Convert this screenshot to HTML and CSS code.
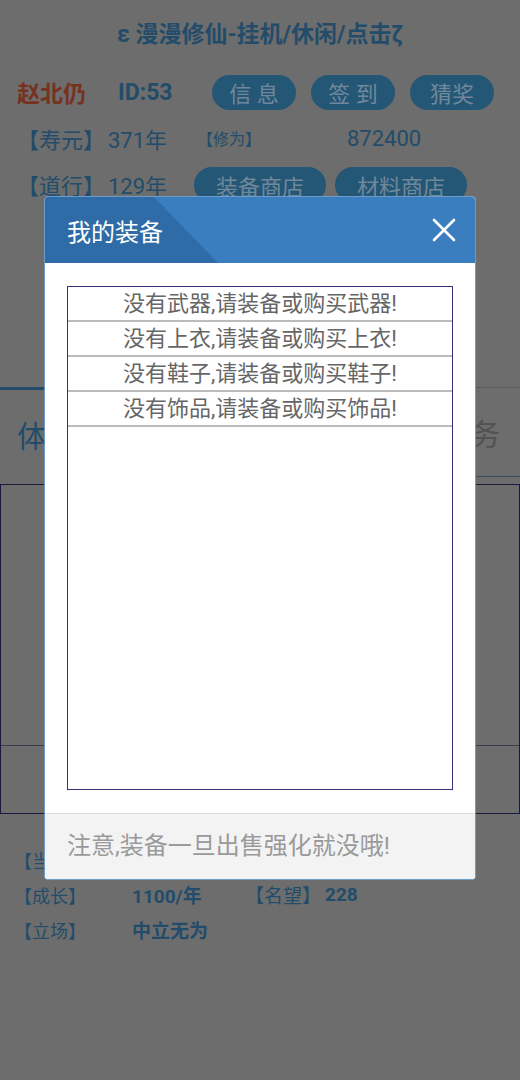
FILE: index.html
```html
<html>
<head>
<meta charset="UTF-8">
<link rel="stylesheet" href="styles.css">
</head>
<body>
<div class="pagina">
	<div class="titulo">ε 漫漫修仙-挂机/休闲/点击ζ</div>

	<div class="fila">
		<span class="nombre">赵北仍</span>
		<span class="ident">ID:53</span>
		<span class="boton b_corto">信 息</span>
		<span class="boton b_corto">签 到</span>
		<span class="boton b_corto">猜奖</span>
	</div>
	<div class="fila">
		<span class="etiq">【寿元】</span>
		<span class="valor">371年</span>
		<span class="etiq_peq">【修为】</span>
		<span class="valor">872400</span>
	</div>
	<div class="fila">
		<span class="etiq">【道行】</span>
		<span class="valor v_corto">129年</span>
		<span class="boton b_largo">装备商店</span>
		<span class="boton b_largo">材料商店</span>
	</div>

	<div class="pestanas">
		<div class="pestana p_activa">体质</div>
		<div class="pestana">&nbsp;</div>
		<div class="pestana p_der">任务</div>
	</div>

	<div class="caja">
		<div class="caja_arriba"></div>
		<div class="caja_abajo"></div>
	</div>

	<div class="info">
		<div class="linea"><span class="i_etiq">【当前】</span></div>
		<div class="linea"><span class="i_etiq">【成长】</span><b class="i_val">1100/年</b><span class="i_etiq2">【名望】</span><b>228</b></div>
		<div class="linea"><span class="i_etiq">【立场】</span><b>中立无为</b></div>
	</div>
</div>

<div class="mascara"></div>

<div class="ventana">
	<div class="v_cabecera">
		<span class="v_titulo">我的装备</span>
		<span class="v_cerrar">
			<svg width="24" height="24" viewBox="0 0 24 24"><path d="M2 2 L22 22 M22 2 L2 22" stroke="#fff" stroke-width="2.6" stroke-linecap="round"/></svg>
		</span>
	</div>
	<div class="v_cuerpo">
		<div class="lista">
			<div class="item">没有武器,请装备或购买武器!</div>
			<div class="item">没有上衣,请装备或购买上衣!</div>
			<div class="item">没有鞋子,请装备或购买鞋子!</div>
			<div class="item">没有饰品,请装备或购买饰品!</div>
		</div>
	</div>
	<div class="v_pie">注意,装备一旦出售强化就没哦!</div>
</div>
</body>
</html>
```

FILE: styles.css
```css
body{
	margin:0;
	width:520px;
	height:1080px;
	overflow:hidden;
	background-color:#6d6d6d;
	font-family: Roboto, "Noto Sans CJK SC", sans-serif;
	color:#224c6a;
}
.pagina{
	position:relative;
}
.titulo{
	text-align:center;
	font-size:23px;
	font-weight:bold;
	line-height:28px;
	padding-top:21px;
	padding-bottom:20px;
}
.fila{
	display:flex;
	align-items:center;
	height:46px;
	padding-left:17px;
	font-size:22px;
}
.nombre{
	width:101px;
	font-size:23px;
	color:#76321e;
	font-weight:bold;
}
.ident{
	width:94px;
	font-size:23px;
	font-weight:bold;
}
.boton{
	display:flex;
	align-items:center;
	justify-content:center;
	height:35px;
	border-radius:18px;
	background-color:#245676;
	color:#71889a;
	font-size:22px;
}
.b_corto{
	width:84px;
	margin-right:15px;
}
.b_largo{
	width:132px;
	margin-right:9px;
	height:36px;
	margin-top:2px;
}
.etiq{
	width:91px;
}
.valor{
	width:89px;
}
.v_corto{
	width:86px;
}
.etiq_peq{
	width:150px;
	font-size:16px;
}
.pestanas{
	display:flex;
	margin-top:180px;
	height:90px;
}
.pestana{
	flex:1;
	display:flex;
	align-items:center;
	padding-left:17px;
	font-size:30px;
	color:#525252;
	border-top:1px solid #5a5a5a;
	border-bottom:1px solid #3a4a58;
}
.p_activa{
	color:#224c6a;
	border-top:3px solid #224c6a;
	border-bottom:none;
}
.p_der{
	justify-content:flex-end;
	padding-right:20px;
}
.caja{
	margin-top:7px;
	border:1px solid #1b1840;
	height:328px;
	display:flex;
	flex-direction:column;
}
.caja_arriba{
	height:260px;
	border-bottom:1px solid #3b3b4a;
}
.caja_abajo{
	flex:1;
}
.info{
	margin-top:28px;
	padding-left:14px;
	font-size:18px;
}
.linea{
	display:flex;
	height:35px;
	align-items:center;
}
.i_etiq{
	width:118px;
}
.i_val{
	width:113px;
	font-size:19px;
}
.i_etiq2{
	width:80px;
	font-size:19px;
}
.linea b{
	font-size:19px;
}
.mascara{
	position:absolute;
	left:0;
	top:0;
	width:520px;
	height:1080px;
}
.ventana{
	position:absolute;
	left:44px;
	top:196px;
	width:430px;
	border:1px solid #6d9cc9;
	border-radius:4px;
	overflow:hidden;
	background-color:#fff;
}
.v_cabecera{
	position:relative;
	height:66px;
	background-color:#3a7ebf;
	display:flex;
	align-items:center;
	justify-content:space-between;
}
.v_cabecera:before{
	content:"";
	position:absolute;
	left:0;
	top:0;
	width:175px;
	height:66px;
	background-color:#2f6ca7;
	clip-path:polygon(0 0,109px 0,173px 100%,0 100%);
}
.v_titulo{
	position:relative;
	padding-left:22px;
	color:#fff;
	font-size:24px;
}
.v_cerrar{
	display:flex;
	margin-right:19px;
}
.v_cuerpo{
	padding:23px 22px;
}
.lista{
	height:502px;
	border:1px solid #3a2d7a;
}
.item{
	height:33px;
	line-height:33px;
	text-align:center;
	font-size:22px;
	color:#666;
	border-bottom:2px solid #bbb;
}
.v_pie{
	height:65px;
	line-height:65px;
	border-top:1px solid #ddd;
	background-color:#f3f3f3;
	padding-left:22px;
	font-size:24px;
	color:#9a9a9a;
}
```
